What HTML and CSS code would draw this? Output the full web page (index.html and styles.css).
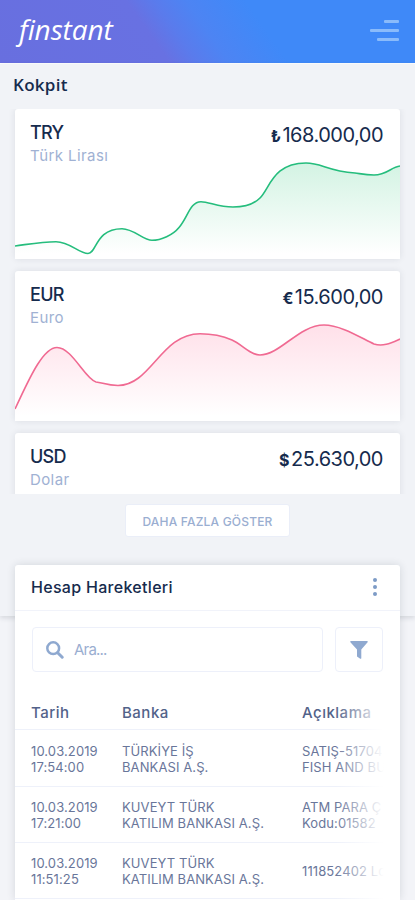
FILE: index.html
```html
<!DOCTYPE html>
<html lang="tr">
<head>
  <meta charset="UTF-8" />
  <meta name="viewport" content="width=device-width, initial-scale=1.0"/>
  <title>Finstant - Kokpit</title>
  <link rel="stylesheet" href="styles.css">
</head>
<body>

  <header>
    <a class="logo">finstant</a>
    <div class="menu"><span></span><span></span><span></span></div>
  </header>

  <section class="cockpit">
    <h1>Kokpit</h1>

    <div class="accounts">
      <div class="card">
        <svg class="chart" viewBox="0 0 385 150" preserveAspectRatio="none">
          <defs>
            <linearGradient id="green" x1="0" y1="54" x2="0" y2="145" gradientUnits="userSpaceOnUse">
              <stop offset="0" stop-color="#d3f3e3"/>
              <stop offset="1" stop-color="#fff"/>
            </linearGradient>
          </defs>
          <path fill="url(#green)" d="M0 137C15 135 27 132.700 41 132.700C55 132.700 64 144.500 73 144.500C82 144.500 80 119.700 107 119.700C119 119.700 128 131.300 137 131.300C146 131.300 158 126 164 118.500C173 108 175 92.700 186 92.700C194 92.700 203 98 218 98C228 98 238 96 245 89C255 79 258 54 291 54C307 54 312 62 340 64C347 65 351 66 359 66C372 66 376 58 385 57V150H0Z"/>
          <path class="line green" d="M0 137C15 135 27 132.700 41 132.700C55 132.700 64 144.500 73 144.500C82 144.500 80 119.700 107 119.700C119 119.700 128 131.300 137 131.300C146 131.300 158 126 164 118.500C173 108 175 92.700 186 92.700C194 92.700 203 98 218 98C228 98 238 96 245 89C255 79 258 54 291 54C307 54 312 62 340 64C347 65 351 66 359 66C372 66 376 58 385 57"/>
        </svg>
        <div class="info">
          <h2>TRY</h2>
          <p>Türk Lirası</p>
        </div>
        <div class="amount"><b>₺</b>168.000,00</div>
      </div>

      <div class="card">
        <svg class="chart" viewBox="0 0 385 150" preserveAspectRatio="none">
          <defs>
            <linearGradient id="pink" x1="0" y1="54" x2="0" y2="145" gradientUnits="userSpaceOnUse">
              <stop offset="0" stop-color="#ffe0e9"/>
              <stop offset="1" stop-color="#fff"/>
            </linearGradient>
          </defs>
          <path fill="url(#pink)" d="M0 138C12 113 27 76.500 42 76.500C57 76.500 70 108 81 111C87 111.500 92 114.500 103 114.500C136 114.500 146 62.700 185 62.700C198 62.700 208 65 217 69C228 74 235 84 245 84C265 84 284 54 309 54C326 54 346 67 359 73C368 76 376 72 385 68V150H0Z"/>
          <path class="line pink" d="M0 138C12 113 27 76.500 42 76.500C57 76.500 70 108 81 111C87 111.500 92 114.500 103 114.500C136 114.500 146 62.700 185 62.700C198 62.700 208 65 217 69C228 74 235 84 245 84C265 84 284 54 309 54C326 54 346 67 359 73C368 76 376 72 385 68"/>
        </svg>
        <div class="info">
          <h2>EUR</h2>
          <p>Euro</p>
        </div>
        <div class="amount"><b>€</b>15.600,00</div>
      </div>

      <div class="card">
        <div class="info">
          <h2>USD</h2>
          <p>Dolar</p>
        </div>
        <div class="amount"><b>$</b>25.630,00</div>
      </div>
    </div>

    <button class="more">DAHA FAZLA GÖSTER</button>
  </section>

  <section class="panel">
    <div class="panel-head">
      <h3>Hesap Hareketleri</h3>
      <div class="dots"><i></i><i></i><i></i></div>
    </div>

    <div class="search-row">
      <div class="search">
        <svg width="18" height="18" viewBox="0 0 18 18">
          <circle cx="7.200" cy="7.200" r="5.900" fill="none" stroke="#8fa9d0" stroke-width="2.500"/>
          <path d="M11.700 11.700L16.200 16.200" stroke="#8fa9d0" stroke-width="3" stroke-linecap="round"/>
        </svg>
        <input type="text" placeholder="Ara..." />
      </div>
      <div class="filter">
        <svg width="18" height="18" viewBox="0 0 18 18">
          <path d="M.8 0H17.200Q18 .4 17.600 1.200L11.300 8.500V17Q11.200 18.200 10.200 17.700L7 15.400V8.500L.4 1.200Q0 .4 .8 0Z" fill="#8fa9d0"/>
        </svg>
      </div>
    </div>

    <div class="table-wrap">
      <table>
        <thead>
          <tr><th>Tarih</th><th>Banka</th><th>Açıklama</th></tr>
        </thead>
        <tbody>
          <tr class="first">
            <td>10.03.2019<br>17:54:00</td>
            <td>TÜRKİYE İŞ<br>BANKASI A.Ş.</td>
            <td>SATIŞ-51704<br>FISH AND BU</td>
          </tr>
          <tr>
            <td>10.03.2019<br>17:21:00</td>
            <td>KUVEYT TÜRK<br>KATILIM BANKASI A.Ş.</td>
            <td>ATM PARA Ç<br>Kodu:01582</td>
          </tr>
          <tr>
            <td>10.03.2019<br>11:51:25</td>
            <td>KUVEYT TÜRK<br>KATILIM BANKASI A.Ş.</td>
            <td>111852402 Lo</td>
          </tr>
        </tbody>
      </table>
    </div>
  </section>

</body>
</html>
```

FILE: styles.css
```css
* {
  margin: 0;
  padding: 0;
  box-sizing: border-box;
}

body {
  height: 900px;
  overflow: hidden;
  background-color: #f3f4f8;
  color: #162b4d;
  font-family: Inter, 'Liberation Sans', sans-serif;
}

header {
  display: flex;
  justify-content: space-between;
  height: 64px;
  padding: 0 16px 0 19px;
  background: linear-gradient(55deg, #686fdf 0%, #6871e2 37%, #5a7bec 43%, #4d84f3 50%, #3f89f8 63%);
  border-bottom: 1px solid #fff;
}

.logo {
  color: white;
  font: italic 28px/58px 'Open Sans', sans-serif;
  letter-spacing: -0.1px;
}

.menu {
  display: flex;
  flex-direction: column;
  align-items: flex-end;
  gap: 6px;
  padding-top: 20px;
}

.menu span {
  width: 29px;
  height: 3px;
  border-radius: 1px;
  background-color: #8abbfb;
}

.menu span:first-child {
  width: 15px;
}

.menu span:last-child {
  width: 22px;
}

.cockpit {
  height: 552px;
  padding: 11px 15px 0;
  background-color: #f1f3f7;
  box-shadow: 0 2px 5px rgba(30, 40, 60, 0.14);
}

h1 {
  height: 34px;
  margin-left: -2px;
  font: 600 17px/20px 'Open Sans', sans-serif;
  letter-spacing: 0.3px;
}

.accounts {
  height: 385px;
  margin: 0 -15px;
  padding: 0 15px;
  overflow: hidden;
}

.card {
  display: flex;
  justify-content: space-between;
  position: relative;
  height: 150px;
  margin-bottom: 12px;
  padding: 13px 17px 0 15px;
  background-color: white;
  border-radius: 3px;
  box-shadow: 0 0 7px rgba(30, 40, 60, 0.1);
}

.chart {
  position: absolute;
  left: 0;
  top: 0;
  width: 100%;
  height: 100%;
}

.line {
  fill: none;
  stroke-width: 1.6;
}

.line.green {
  stroke: #25bd7d;
}

.line.pink {
  stroke: #f06a92;
}

.info,
.amount {
  position: relative;
}

h2 {
  font-size: 18px;
  font-weight: 500;
  line-height: 22px;
  letter-spacing: -0.7px;
}

.info p {
  color: #a0b1d3;
  font-size: 15px;
  line-height: 23px;
  letter-spacing: 0.4px;
}

.amount {
  font-size: 20px;
  line-height: 26px;
  letter-spacing: -0.5px;
}

.amount b {
  margin-right: 2px;
  font-size: 16px;
}

.more {
  display: block;
  width: 165px;
  height: 33px;
  margin: 10px auto 0;
  padding-top: 1px;
  border: 1px solid #eaeef8;
  border-radius: 3px;
  background-color: white;
  color: #9aaed1;
  font: 500 12px Inter, sans-serif;
  letter-spacing: 0.2px;
}

.panel {
  position: relative;
  height: 335px;
  margin: -51px 15px 0;
  background-color: white;
  border-radius: 3px 3px 0 0;
  box-shadow: 0 0 8px rgba(30, 40, 60, 0.14);
}

.panel-head {
  display: flex;
  align-items: center;
  justify-content: space-between;
  height: 46px;
  padding: 0 23px 1px 16px;
  border-bottom: 1px solid #f1f3fa;
}

h3 {
  font-size: 16px;
  font-weight: 500;
  letter-spacing: 0.3px;
}

.dots {
  display: flex;
  flex-direction: column;
  gap: 3px;
}

.dots i {
  width: 4px;
  height: 4px;
  border-radius: 50%;
  background-color: #7d9bc6;
}

.search-row {
  display: flex;
  justify-content: space-between;
  height: 45px;
  margin: 16px 17px 0;
}

.search,
.filter {
  display: flex;
  align-items: center;
  border: 1px solid #edf0fa;
  border-radius: 4px;
}

.search {
  width: 291px;
  padding-left: 13px;
  gap: 10px;
}

.search input {
  width: 200px;
  border: none;
  color: #9aaed1;
  font: 15px Inter, sans-serif;
  letter-spacing: -0.8px;
}

.search input::placeholder {
  color: #9aaed1;
}

.filter {
  width: 48px;
  justify-content: center;
}

.table-wrap {
  position: relative;
  height: 204px;
  margin-top: 23px;
}

/* fades the columns out on the right */
.table-wrap::after {
  content: "";
  position: absolute;
  top: 0;
  right: 0;
  width: 65px;
  height: 100%;
  background: linear-gradient(to right, rgba(255, 255, 255, 0), #fff 75%);
}

table {
  width: 100%;
  table-layout: fixed;
  border-collapse: collapse;
}

th,
td {
  padding-left: 16px;
  text-align: left;
  white-space: nowrap;
  border-bottom: 1px solid #eef1fa;
}

th {
  height: 34px;
  padding-top: 2px;
  color: #526289;
  font-size: 15px;
  font-weight: 500;
  letter-spacing: 0.5px;
}

th:nth-child(1) {
  width: 91px;
}

th:nth-child(2) {
  width: 180px;
}

td {
  height: 56px;
  padding-top: 2px;
  color: #69769a;
  font-size: 13px;
  line-height: 16px;
  letter-spacing: 0.1px;
}

.first td {
  height: 57px;
}
```
